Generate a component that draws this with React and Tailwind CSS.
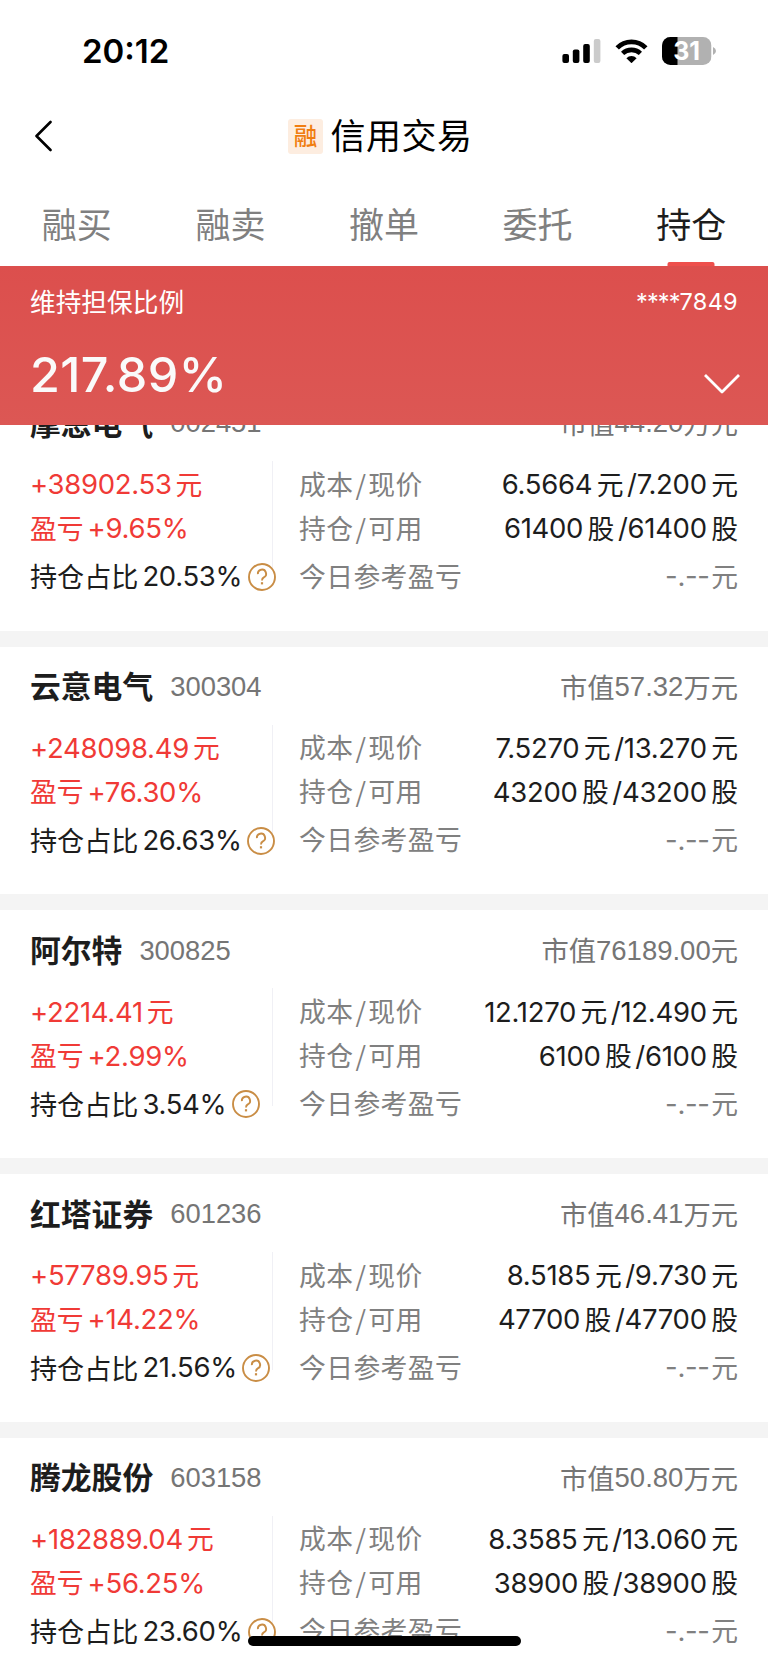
const TABS = ["融买", "融卖", "撤单", "委托", "持仓"];

const HOLDINGS = [
  { name: "摩恩电气", code: "002451", value: ["44.20", "万元"], profit: "+38902.53", rate: "+9.65%", share: "20.53%", cost: "6.5664", price: "7.200", held: "61400", free: "61400" },
  { name: "云意电气", code: "300304", value: ["57.32", "万元"], profit: "+248098.49", rate: "+76.30%", share: "26.63%", cost: "7.5270", price: "13.270", held: "43200", free: "43200" },
  { name: "阿尔特", code: "300825", value: ["76189.00", "元"], profit: "+2214.41", rate: "+2.99%", share: "3.54%", cost: "12.1270", price: "12.490", held: "6100", free: "6100" },
  { name: "红塔证券", code: "601236", value: ["46.41", "万元"], profit: "+57789.95", rate: "+14.22%", share: "21.56%", cost: "8.5185", price: "9.730", held: "47700", free: "47700" },
  { name: "腾龙股份", code: "603158", value: ["50.80", "万元"], profit: "+182889.04", rate: "+56.25%", share: "23.60%", cost: "8.3585", price: "13.060", held: "38900", free: "38900" },
];

function Num({ children }) {
  return <span className="font-['Inter',sans-serif] text-[27.5px] tracking-[-0.3px]">{children}</span>;
}

function StatusBar() {
  return (
    <div className="flex h-[102px] items-center justify-between pr-[52px] pl-[82px]">
      <span className="pt-[2px] font-['Inter',sans-serif] text-[33px] font-semibold text-black">20:12</span>
      <div className="flex items-center">
        <svg className="mr-[14px] h-6 w-[39px]" viewBox="0 0 39 24">
          <rect x="0.4" y="15" width="6.6" height="9" rx="2" />
          <rect x="10.8" y="10.5" width="6.6" height="13.5" rx="2" />
          <rect x="21.2" y="5" width="6.6" height="19" rx="2" />
          <rect x="31.8" y="0" width="6.6" height="24" rx="2" fill="#cbcbcb" />
        </svg>
        <svg className="mr-[14.5px] h-6 w-[33px]" viewBox="0 0 33 24">
          <path d="M2.2 8.9 A20 20 0 0 1 30.8 8.9" fill="none" stroke="#000" strokeWidth="4.8" />
          <path d="M7.6 14.4 A12.9 12.9 0 0 1 25.4 14.4" fill="none" stroke="#000" strokeWidth="4.6" />
          <path d="M11.4 19.2 A7.2 7.2 0 0 1 21.6 19.2 L16.5 24.2 Z" />
        </svg>
        <svg className="h-[28px] w-[54px]" viewBox="0 0 54 28">
          <defs>
            <clipPath id="battery">
              <rect width="49.5" height="28" rx="8.5" />
            </clipPath>
          </defs>
          <g clipPath="url(#battery)">
            <rect width="49.5" height="28" fill="#b1b1b1" />
            <rect width="15.5" height="28" fill="#000" />
          </g>
          <path d="M51 10 Q54 11.5 54 14 Q54 16.5 51 18 Z" fill="#b1b1b1" />
          <text x="24.7" y="22.8" textAnchor="middle" fill="#fff" fontFamily="Inter" fontWeight="700" fontSize="25">31</text>
        </svg>
      </div>
    </div>
  );
}

function TitleBar() {
  return (
    <div className="relative flex h-[68px] items-center justify-center">
      <svg className="absolute left-[34px] h-8 w-[18px]" viewBox="0 0 18 32" fill="none" stroke="#000" strokeWidth="2.6" strokeLinecap="round" strokeLinejoin="round">
        <path d="M16.5 2 L2.5 16 L16.5 30" />
      </svg>
      <span className="mr-[7.5px] flex size-[35px] items-center justify-center rounded-[3px] bg-[#fdede0] pb-px text-[23.5px] font-medium text-[#f07d10]">融</span>
      <span className="mr-[7.5px] pb-[3px] text-[35px] tracking-[0.5px] text-black">信用交易</span>
    </div>
  );
}

function Tabs() {
  return (
    <div className="flex h-24 shrink-0">
      {TABS.map((tab, i) => (
        <div key={tab} className={`relative flex h-full flex-1 items-center justify-center pt-[11px] text-[35px] ${i === 4 ? "text-[#1d1d1d]" : "text-[#808080]"}`}>
          {tab}
          {i === 4 && <span className="absolute bottom-0 left-1/2 h-1 w-[47px] -translate-x-1/2 rounded-t-[2px] bg-[#ee4f4c]" />}
        </div>
      ))}
    </div>
  );
}

function Summary() {
  return (
    <div className="relative z-10 flex h-[159px] shrink-0 flex-col bg-linear-to-b from-[#dc4f4d] to-[#dc5754] px-[30px] text-white">
      <div className="flex h-[72px] items-center justify-between">
        <span className="pb-[2px] text-[25.7px]">维持担保比例</span>
        <span className="flex font-['Inter',sans-serif] text-[23.5px]">
          <span className="tracking-[-0.9px]">****</span>
          <span className="tracking-[0.3px]">7849</span>
        </span>
      </div>
      <div className="flex h-[76px] items-center justify-between">
        <span className="pb-[2px] font-['Inter',sans-serif] text-[48.5px] font-medium tracking-[0.4px] text-[#fafafa]">217.89%</span>
        <svg className="mt-[15px] -mr-[2px] h-5 w-9" viewBox="0 0 36 20" fill="none" stroke="#fff" strokeWidth="2.8" strokeLinejoin="round">
          <path d="M1 1 L18 18 L35 1" />
        </svg>
      </div>
    </div>
  );
}

function Help() {
  return (
    <svg className="ml-[5.5px] size-7 shrink-0" viewBox="0 0 28 28" fill="none" stroke="#c98d45" strokeWidth="1.9">
      <circle cx="14" cy="14" r="13" fill="#fff" />
      <path d="M9.9 11.2 A4.1 4.1 0 1 1 15.8 14.4 Q14 15.4 14 17.4" />
      <path d="M14 19.2 V21.4" strokeWidth="2.2" />
    </svg>
  );
}

function Pair({ label, a, b, unit }) {
  return (
    <div className="flex h-11 items-center justify-between">
      <span className="pb-[2px] tracking-[0.4px] text-[#808080]">{label[0]}<span className="mx-[2px]">/</span>{label[1]}</span>
      <span className="flex items-center text-[#1d1d1d]">
        <Num>{a}</Num><span className="mr-[3.5px] ml-[4.5px] pb-[2px]">{unit}</span><Num>/{b}</Num><span className="ml-[4.5px] pb-[2px]">{unit}</span>
      </span>
    </div>
  );
}

function Holding({ h }) {
  return (
    <section className="h-[263.7px] shrink-0 border-b-[16px] border-[#f4f4f4] bg-white px-[30px] text-[26.8px] leading-none">
      <div className="flex h-[80px] items-center justify-between">
        <div className="flex items-center">
          <span className="pb-[2px] text-[30.8px] font-bold text-[#1d1d1d]">{h.name}</span>
          <span className="ml-[17px] font-['Liberation_Sans',sans-serif] text-[27.4px] text-[#757575]">{h.code}</span>
        </div>
        <span className="flex items-center text-[27.3px] text-[#757575]">
          <span className="pb-px">市值</span>
          <span className="font-['Liberation_Sans',sans-serif] text-[27.5px]">{h.value[0]}</span>
          <span className="pb-px">{h.value[1]}</span>
        </span>
      </div>
      <div className="flex">
        <div className="relative w-[243px] shrink-0">
          <span className="absolute -top-[2px] right-0 h-[118px] w-px bg-[#f0f0f5]" />
          <div className="relative">
            <div className="flex h-11 items-center text-[#f03a36]"><Num>{h.profit}</Num><span className="ml-[4px] pb-[2px]">元</span></div>
            <div className="flex h-11 items-center text-[#f03a36]"><span className="mr-[4px] pb-[2px]">盈亏</span><Num>{h.rate}</Num></div>
            <div className="flex h-[52px] items-center whitespace-nowrap text-[#1d1d1d]"><span className="mr-[4px] pb-[2px] text-[27.1px]">持仓占比</span><Num>{h.share}</Num><Help /></div>
          </div>
        </div>
        <div className="ml-[26px] flex-1">
          <Pair label={["成本", "现价"]} a={h.cost} b={h.price} unit="元" />
          <Pair label={["持仓", "可用"]} a={h.held} b={h.free} unit="股" />
          <div className="flex h-[52px] items-center justify-between text-[#808080]">
            <span className="pb-[2px] tracking-[0.4px]">今日参考盈亏</span>
            <span className="flex items-center"><Num>-.--</Num><span className="ml-[1.5px] pb-[2px]">元</span></span>
          </div>
        </div>
      </div>
    </section>
  );
}

export default function App() {
  return (
    <main className="relative flex h-[1663px] w-[768px] flex-col overflow-hidden bg-white font-['Noto_Sans_CJK_SC',sans-serif]">
      <StatusBar />
      <TitleBar />
      <Tabs />
      <Summary />
      <div className="flex min-h-0 flex-1 flex-col overflow-hidden">
        <div className="-mt-[42px] flex flex-col">
          {HOLDINGS.map((h) => <Holding key={h.code} h={h} />)}
        </div>
      </div>
      <div className="absolute bottom-[17px] left-[248px] h-[10px] w-[273px] rounded-full bg-black" />
    </main>
  );
}
